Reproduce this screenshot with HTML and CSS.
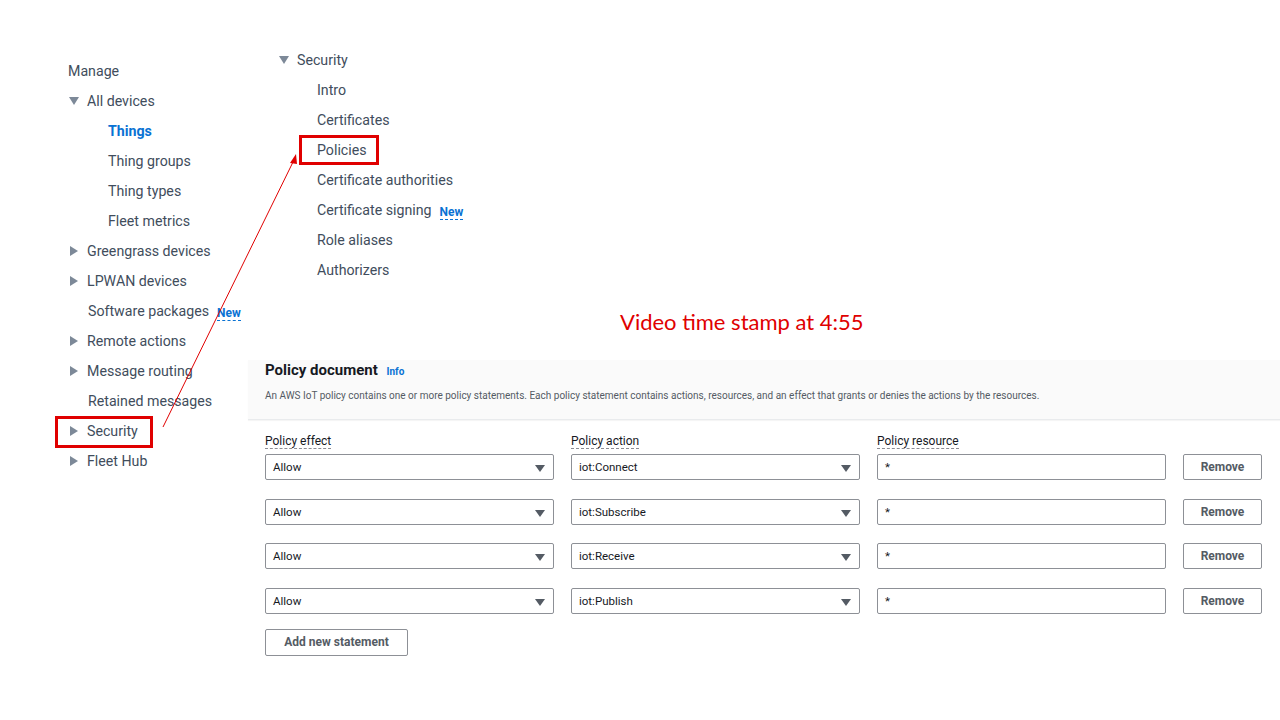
FILE: index.html
```html
<!DOCTYPE html>
<html lang="en">
<head>
<meta charset="utf-8">
<title>AWS IoT policy</title>
<link rel="stylesheet" href="styles.css">
</head>
<body>
<div class="page">
  <nav class="leftnav">
    <div class="item plain">Manage</div>
    <div class="item"><span class="tri down"></span>All devices</div>
    <div class="item sub active">Things</div>
    <div class="item sub">Thing groups</div>
    <div class="item sub">Thing types</div>
    <div class="item sub">Fleet metrics</div>
    <div class="item"><span class="tri right"></span>Greengrass devices</div>
    <div class="item"><span class="tri right"></span>LPWAN devices</div>
    <div class="item noicon">Software packages <span class="new">New</span></div>
    <div class="item"><span class="tri right"></span>Remote actions</div>
    <div class="item"><span class="tri right"></span>Message routing</div>
    <div class="item noicon">Retained messages</div>
    <div class="item"><span class="tri right"></span>Security</div>
    <div class="item"><span class="tri right"></span>Fleet Hub</div>
  </nav>
  <main class="main">
    <div class="tree">
      <div class="item"><span class="tri down"></span>Security</div>
      <div class="item sub">Intro</div>
      <div class="item sub">Certificates</div>
      <div class="item sub">Policies</div>
      <div class="item sub">Certificate authorities</div>
      <div class="item sub">Certificate signing <span class="new">New</span></div>
      <div class="item sub">Role aliases</div>
      <div class="item sub">Authorizers</div>
    </div>
    <div class="stamp">Video time stamp at 4:55</div>
    <section class="panel">
      <header class="panel-head">
        <h2 class="title">Policy document <span class="info">Info</span></h2>
        <p class="desc">An AWS IoT policy contains one or more policy statements. Each policy statement contains actions, resources, and an effect that grants or denies the actions by the resources.</p>
      </header>
      <div class="panel-body">
        <div class="grid labels">
          <span class="label">Policy effect</span>
          <span class="label">Policy action</span>
          <span class="label">Policy resource</span>
          <span></span>
        </div>
        <div class="grid row">
          <div class="select">Allow<span class="caret"></span></div>
          <div class="select">iot:Connect<span class="caret"></span></div>
          <div class="input">*</div>
          <div class="btn">Remove</div>
        </div>
        <div class="grid row">
          <div class="select">Allow<span class="caret"></span></div>
          <div class="select">iot:Subscribe<span class="caret"></span></div>
          <div class="input">*</div>
          <div class="btn">Remove</div>
        </div>
        <div class="grid row">
          <div class="select">Allow<span class="caret"></span></div>
          <div class="select">iot:Receive<span class="caret"></span></div>
          <div class="input">*</div>
          <div class="btn">Remove</div>
        </div>
        <div class="grid row">
          <div class="select">Allow<span class="caret"></span></div>
          <div class="select">iot:Publish<span class="caret"></span></div>
          <div class="input">*</div>
          <div class="btn">Remove</div>
        </div>
        <div class="btn add">Add new statement</div>
      </div>
    </section>
  </main>
  <svg class="annot" width="1280" height="720" viewBox="0 0 1280 720">
    <rect x="56.5" y="417.5" width="95" height="29" fill="none" stroke="#e00000" stroke-width="3"/>
    <rect x="300.5" y="136.5" width="77" height="27" fill="none" stroke="#e00000" stroke-width="3"/>
    <line x1="163" y1="427" x2="294" y2="160" stroke="#e00000" stroke-width="1"/>
    <polygon points="296,154 290,163 297,164" fill="#e00000"/>
  </svg>
</div>
</body>
</html>
```
FILE: styles.css
```css
html, body {
  margin: 0;
  padding: 0;
  background: #ffffff;
}
body {
  font-family: "Roboto", "Liberation Sans", sans-serif;
  color: #414d5c;
  width: 1280px;
  height: 720px;
  overflow: hidden;
}
.page {
  position: relative;
  display: flex;
  width: 1280px;
  height: 720px;
}
.leftnav {
  width: 248px;
  box-sizing: border-box;
  padding: 56px 0 0 68px;
  flex: none;
}
.item {
  display: flex;
  align-items: center;
  height: 30px;
  font-size: 14.2px;
  color: #414d5c;
  white-space: nowrap;
}
.tri {
  width: 0;
  height: 0;
}
.tri.down {
  border-left: 5px solid transparent;
  border-right: 5px solid transparent;
  border-top: 8px solid #7d8998;
  margin-left: 1px;
  margin-right: 8px;
}
.tri.right {
  border-top: 5px solid transparent;
  border-bottom: 5px solid transparent;
  border-left: 8px solid #7d8998;
  margin-right: 9px;
  margin-left: 2px;
}
.leftnav .sub { padding-left: 40px; }
.leftnav .noicon { padding-left: 20px; }
.active { color: #0972d3; font-weight: 700; }
.new {
  font-size: 12px;
  font-weight: 700;
  color: #0972d3;
  border-bottom: 1px dashed #0972d3;
  line-height: 14px;
  margin-left: 8px;
  margin-top: 4px;
}
.main {
  flex: 1;
  min-width: 0;
}
.tree {
  padding: 45px 0 0 30px;
}
.tree .sub { padding-left: 39px; }
.stamp {
  margin: 22px 0 0 372px;
  height: 30px;
  line-height: 30px;
  font-family: "Lato", "Open Sans", sans-serif;
  font-size: 22px;
  color: #e00000;
}
.panel {
  margin-top: 23px;
}
.panel-head {
  background: #fafafa;
  padding: 1px 0 16px 17px;
  border-bottom: 1px solid #e9ebed;
  box-shadow: 0 1px 1px rgba(0,0,0,0.04);
}
.title {
  margin: 0;
  font-size: 15px;
  line-height: 18px;
  font-weight: 700;
  color: #16191f;
}
.info {
  font-size: 10px;
  color: #0972d3;
  margin-left: 5px;
}
.desc {
  margin: 8px 0 0;
  font-size: 10px;
  line-height: 14px;
  color: #545b64;
}
.panel-body {
  padding: 13px 0 0 17px;
}
.grid {
  display: grid;
  grid-template-columns: 289px 289px 289px 79px;
  column-gap: 17px;
}
.labels {
  height: 16px;
  align-items: center;
}
.label {
  justify-self: start;
  font-size: 12px;
  line-height: 14px;
  color: #16191f;
  border-bottom: 1px dashed #8c8c94;
}
.row { margin-top: 5px; }
.row + .row { margin-top: 18.5px; }
.select, .input {
  position: relative;
  height: 26px;
  box-sizing: border-box;
  border: 1px solid #8d9096;
  border-radius: 2px;
  padding-left: 7px;
  display: flex;
  align-items: center;
  font-size: 11.5px;
  color: #16191f;
}
.caret {
  position: absolute;
  right: 8px;
  top: 10px;
  border-left: 5px solid transparent;
  border-right: 5px solid transparent;
  border-top: 7px solid #545b64;
}
.btn {
  height: 26px;
  box-sizing: border-box;
  border: 1px solid #8d9096;
  border-radius: 2px;
  display: flex;
  align-items: center;
  justify-content: center;
  font-size: 12px;
  font-weight: 700;
  color: #545b64;
}
.btn.add {
  margin-top: 15px;
  width: 143px;
  height: 27px;
}
.annot {
  position: absolute;
  left: 0;
  top: 0;
  pointer-events: none;
}
```
